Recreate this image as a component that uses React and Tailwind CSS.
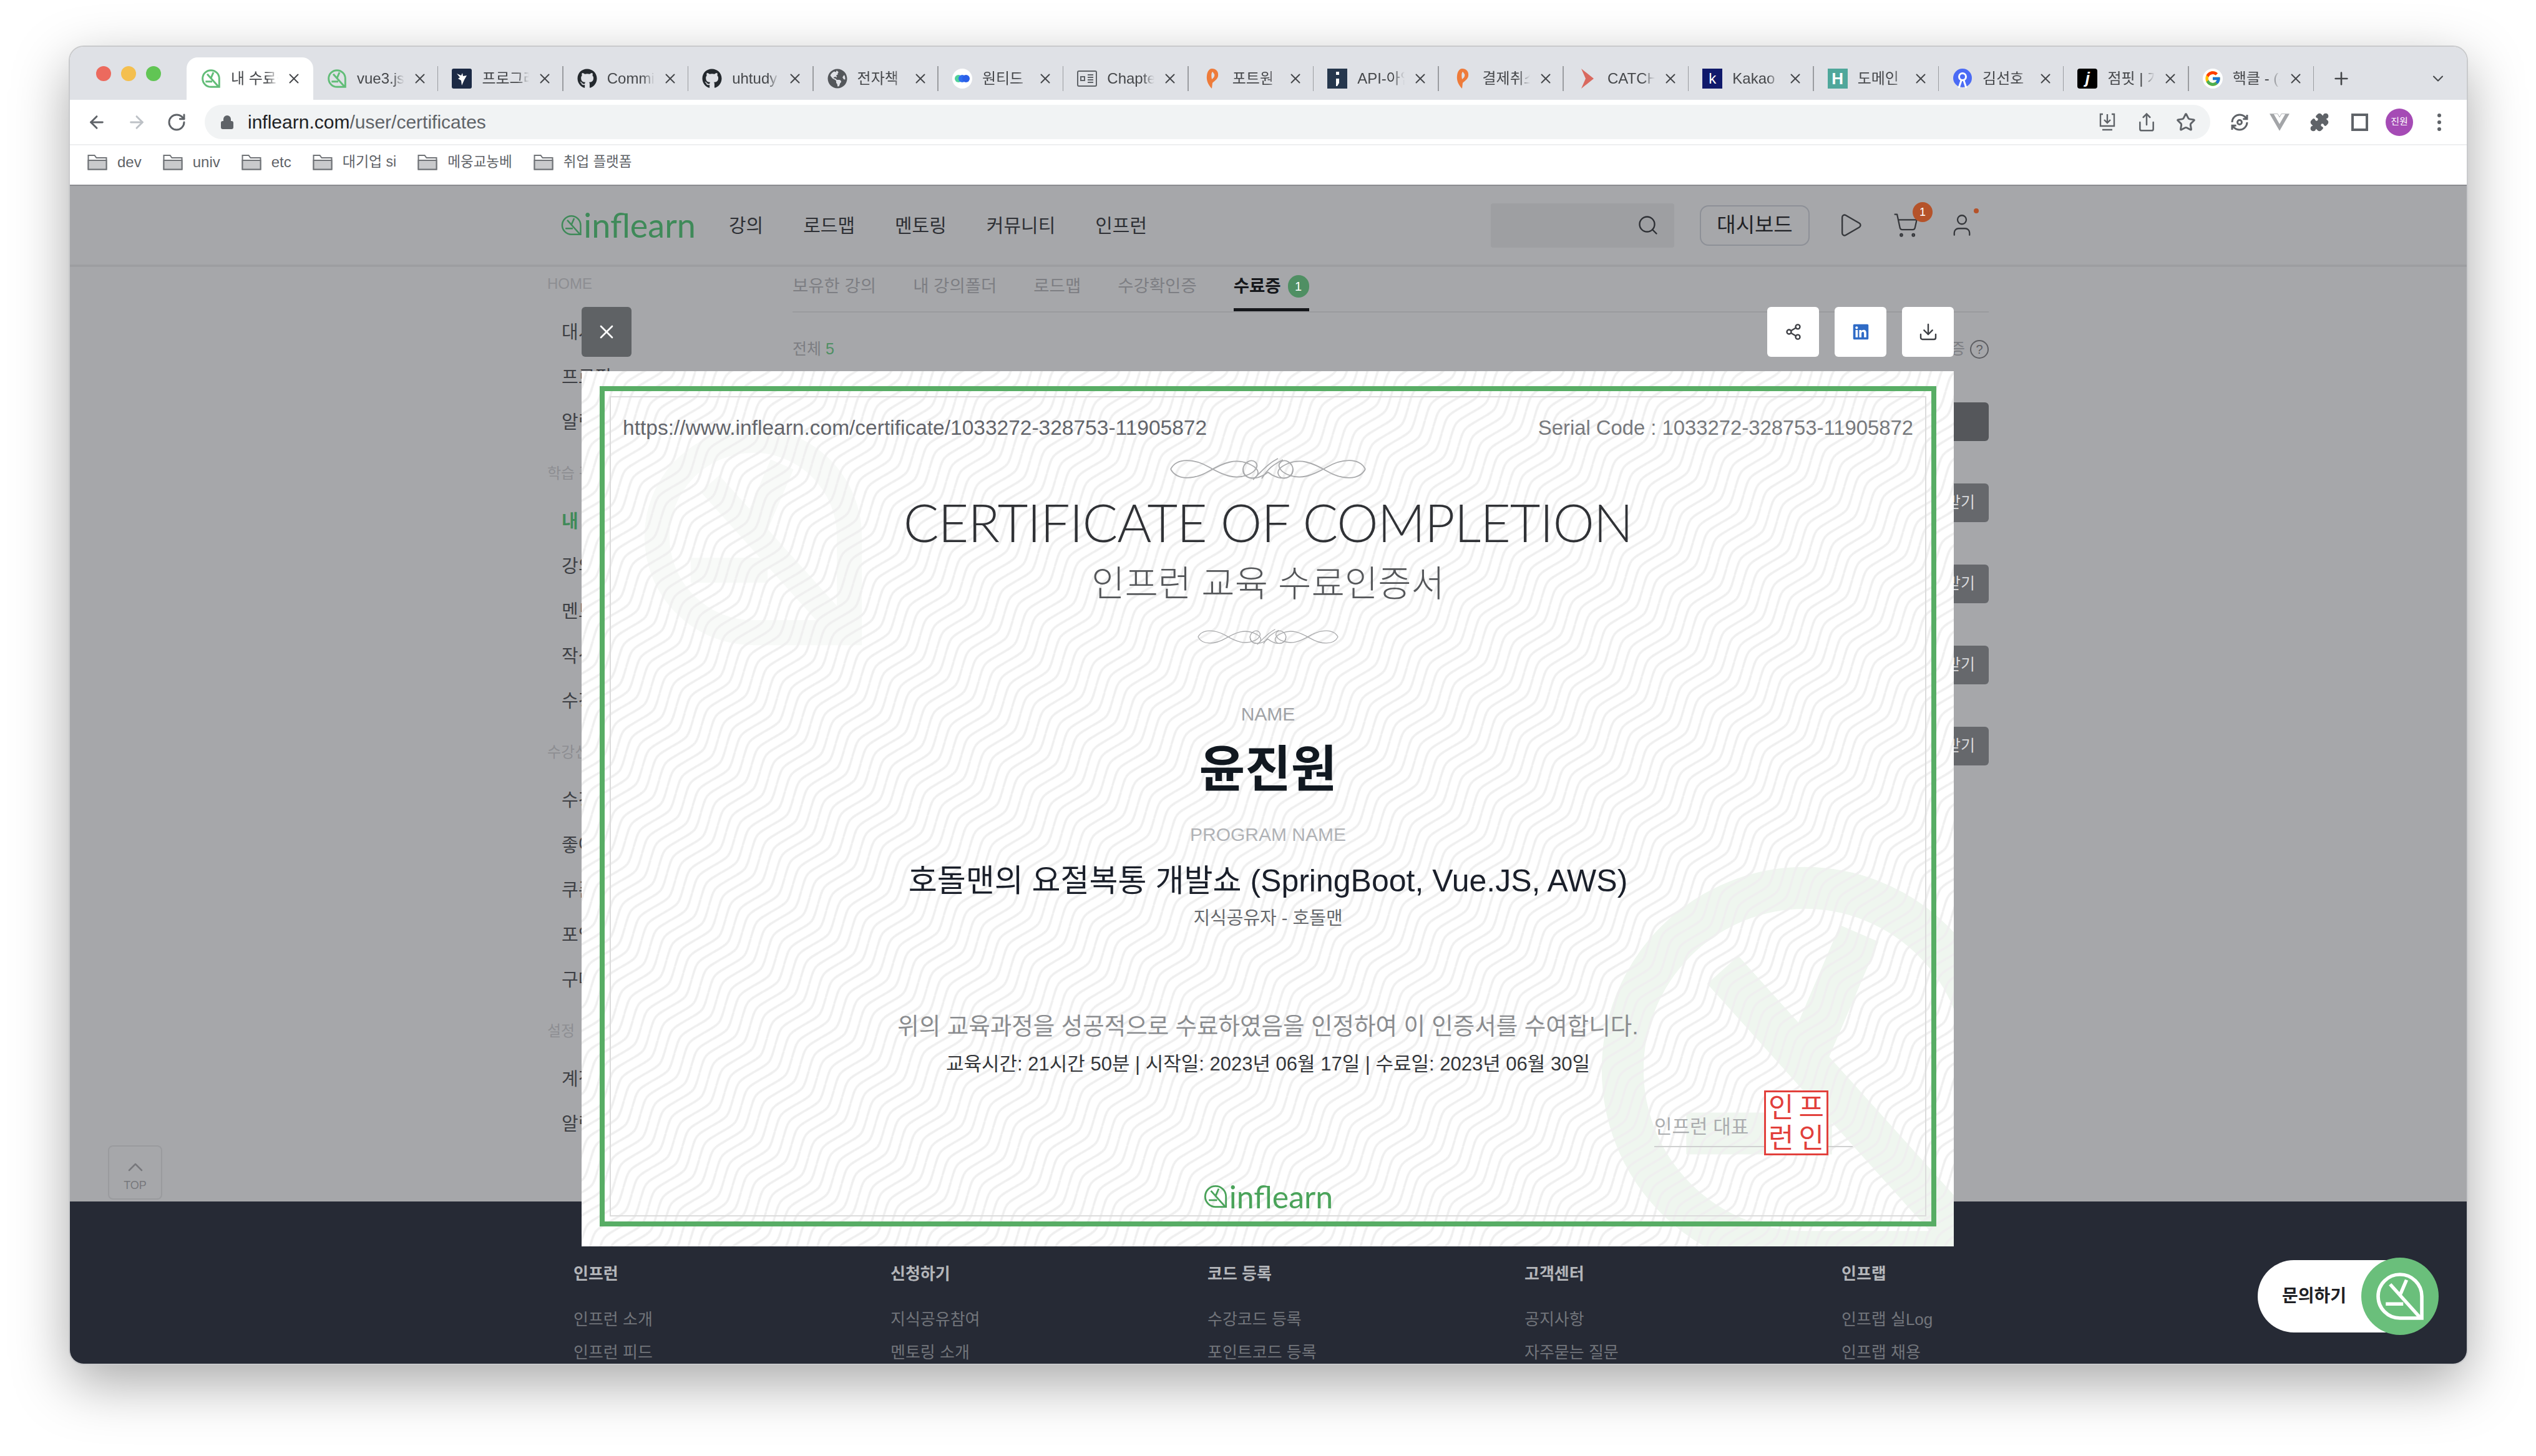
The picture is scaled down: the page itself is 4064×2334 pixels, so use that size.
import { ArrowLeft, ArrowRight, ChevronDown, ChevronUp, Download, Lock, Play, Plus, Puzzle, RotateCw, Search, Share, Share2, ShoppingCart, Star, User, X } from 'lucide-react';
import { FaGithub, FaGlobeAmericas, FaLinkedin } from 'react-icons/fa';
import { FcGoogle } from 'react-icons/fc';
import { SiVuedotjs } from 'react-icons/si';

const sans = "font-['Liberation_Sans','Noto_Sans_CJK_KR',sans-serif]";

function Leaf({ className, width = 2 }) {
  return (
    <svg viewBox="0 0 24 24" fill="none" stroke="currentColor" strokeWidth={width} className={className}>
      <path d="M12 2a10 10 0 1 0 0 20h10V12A10 10 0 0 0 12 2Z" />
      <path d="M7.5 6.5 21 21.5M15 4.5 12 11.5M5.5 15.5h8" />
    </svg>
  );
}

function Favicon({ kind }) {
  if (kind === 'leaf') return <Leaf className="w-[32px] h-[32px] text-[#62bd78]" width={2.2} />;
  if (kind === 'github') return <FaGithub className="w-[32px] h-[32px] text-[#24292e]" />;
  if (kind === 'globe') return <FaGlobeAmericas className="w-[32px] h-[32px] text-[#54575b]" />;
  if (kind === 'google') return <div className="w-[32px] h-[32px] rounded-full bg-white flex items-center justify-center"><FcGoogle className="w-[28px] h-[28px]" /></div>;
  if (kind === 'programmers') {
    return (
      <svg viewBox="0 0 32 32" className="w-[32px] h-[32px]">
        <rect width="32" height="32" rx="3" fill="#1c2a45" />
        <path d="M8 8l7 3 2-4 1 5 6-1-4 7-4 9-1-8-5-3 3-2z" fill="#fff" />
      </svg>
    );
  }
  if (kind === 'wanted') {
    return (
      <svg viewBox="0 0 32 32" className="w-[32px] h-[32px]">
        <circle cx="16" cy="16" r="16" fill="#fff" />
        <circle cx="10" cy="16" r="6" fill="#4fd19b" />
        <circle cx="16" cy="16" r="6" fill="#2f6df0" />
        <circle cx="22" cy="16" r="6" fill="#2a5fe8" />
      </svg>
    );
  }
  if (kind === 'chapter') {
    return (
      <svg viewBox="0 0 32 32" fill="none" stroke="#5f6368" strokeWidth="2" className="w-[32px] h-[32px]">
        <rect x="1" y="4" width="30" height="24" rx="2" />
        <path d="M17 10h9M17 14h9M17 18h9M17 22h9M6 13h6v6H6z" />
      </svg>
    );
  }
  if (kind === 'portone') {
    return (
      <svg viewBox="0 0 32 32" className="w-[32px] h-[32px]">
        <path d="M15 0c8 0 11 6 10 12-1 5-6 8-9 11l-1 9C9 26 6 19 7 11 8 4 11 0 15 0Zm1 5c-2 2-2 6-1 12 3-2 5-5 4-8-1-2-2-3-3-4Z" fill="#ee7b3a" />
      </svg>
    );
  }
  if (kind === 'semicolon') {
    return (
      <svg viewBox="0 0 32 32" className="w-[32px] h-[32px]">
        <rect width="32" height="32" fill="#26374d" />
        <rect x="14" y="5" width="5" height="5" fill="#fff" />
        <path d="M14 16h5v7l-3 5h-2z" fill="#fff" />
      </svg>
    );
  }
  if (kind === 'catch') {
    return (
      <svg viewBox="0 0 32 32" className="w-[32px] h-[32px]">
        <path d="M6 0l20 16L6 32l7-16z" fill="#d9695f" />
      </svg>
    );
  }
  if (kind === 'kakao') return <div className="w-[32px] h-[32px] bg-[#10196b] text-white text-[24px] leading-[32px] text-center">k</div>;
  if (kind === 'hosting') return <div className="w-[32px] h-[32px] bg-[#4fa79b] text-white text-[26px] leading-[32px] text-center font-bold">H</div>;
  if (kind === 'rallit') {
    return (
      <svg viewBox="0 0 32 32" className="w-[32px] h-[32px]">
        <ellipse cx="16" cy="15" rx="15" ry="15" fill="#4b6bf5" />
        <circle cx="16" cy="13" r="5.5" fill="none" stroke="#fff" strokeWidth="3" />
        <path d="M14 19l-4 12M18 19l4 12" stroke="#fff" strokeWidth="3" />
      </svg>
    );
  }
  return <div className="w-[32px] h-[32px] rounded-[4px] bg-black text-white text-[26px] leading-[30px] text-center font-bold italic">j</div>;
}

const tabs = [
  ['leaf', '내 수료증'],
  ['leaf', 'vue3.js'],
  ['programmers', '프로그래머스'],
  ['github', 'Commits'],
  ['github', 'uhtudy'],
  ['globe', '전자책'],
  ['wanted', '원티드'],
  ['chapter', 'Chapter'],
  ['portone', '포트원'],
  ['semicolon', 'API-아임포트'],
  ['portone', '결제취소'],
  ['catch', 'CATCH'],
  ['kakao', 'Kakao'],
  ['hosting', '도메인'],
  ['rallit', '김선호'],
  ['jumpit', '점핏 | 개발'],
  ['google', '핵클 - (주)'],
];

function TabBar() {
  return (
    <div className="h-[85px] shrink-0 bg-[#dfe1e6] flex items-end">
      <div className="h-[68px] w-[187px] shrink-0 flex items-center gap-[16px] pl-[42px] pb-[16px]">
        <span className="w-[24px] h-[24px] rounded-full bg-[#ec6a5e]" />
        <span className="w-[24px] h-[24px] rounded-full bg-[#f4bf4f]" />
        <span className="w-[24px] h-[24px] rounded-full bg-[#61c554]" />
      </div>
      {tabs.map(([kind, title], i) => (
        <div key={i} className={i === 0 ? 'h-[68px] w-[203px] shrink-0 flex items-center bg-white rounded-t-[18px] pl-[23px]' : 'h-[68px] w-[200.4px] shrink-0 flex items-center pl-[22px]'}>
          <Favicon kind={kind} />
          <span className="ml-[16px] w-[76px] overflow-hidden whitespace-nowrap text-[24px] text-[#45474a] [mask-image:linear-gradient(to_right,black_75%,transparent)]">{title}</span>
          <X className="ml-[12px] w-[26px] h-[26px] text-[#45474a] shrink-0" strokeWidth={1.8} />
          {i > 0 && <span className="ml-auto h-[40px] w-[1.5px] bg-[#9a9ca0]" />}
        </div>
      ))}
      <div className="h-[68px] flex items-center">
        <Plus className="ml-[28px] w-[32px] h-[32px] text-[#45474a]" strokeWidth={2} />
        <ChevronDown className="ml-[125px] w-[28px] h-[28px] text-[#45474a]" strokeWidth={1.8} />
      </div>
    </div>
  );
}

function Toolbar() {
  return (
    <div className="h-[71px] shrink-0 bg-white flex items-center pl-[27px]">
      <div className="flex items-center gap-[32px] text-[#5f6368]">
        <ArrowLeft className="w-[32px] h-[32px]" strokeWidth={2.2} />
        <ArrowRight className="w-[32px] h-[32px] text-[#bdc1c6]" strokeWidth={2.2} />
        <RotateCw className="w-[32px] h-[32px]" strokeWidth={2.2} />
      </div>
      <div className="ml-[29px] w-[3214px] h-[55px] rounded-full bg-[#f1f3f4] flex items-center pl-[24px] pr-[23px]">
        <Lock className="w-[24px] h-[24px] text-[#5f6368] fill-[#5f6368]" />
        <span className="ml-[21px] text-[30px] text-[#202124]">inflearn.com<span className="text-[#5f6368]">/user/certificates</span></span>
        <div className="ml-auto flex items-center gap-[31px] text-[#5f6368]">
          <svg viewBox="0 0 32 32" fill="none" stroke="currentColor" strokeWidth="2.4" className="w-[32px] h-[32px]">
            <path d="M9 3H5v19h22V3h-4M16 3v14M11 12l5 5 5-5M8 28h16" />
          </svg>
          <Share className="w-[32px] h-[32px]" strokeWidth={1.9} />
          <Star className="w-[32px] h-[32px]" strokeWidth={2.2} />
        </div>
      </div>
      <div className="ml-[31px] flex items-center gap-[32px] text-[#5f6368]">
        <svg viewBox="0 0 24 24" fill="none" stroke="currentColor" strokeWidth="2.2" className="w-[32px] h-[32px]">
          <path d="M3 12a9 9 0 0 1 9-9 9.75 9.75 0 0 1 6.74 2.74L21 8M21 3v5h-5M21 12a9 9 0 0 1-9 9 9.75 9.75 0 0 1-6.74-2.74L3 16M8 16H3v5" />
          <circle cx="12" cy="12" r="2.6" />
        </svg>
        <SiVuedotjs className="w-[32px] h-[32px] text-[#a3a5a8]" />
        <Puzzle className="w-[32px] h-[32px] fill-[#5f6368]" strokeWidth={1.5} />
        <div className="w-[32px] flex justify-center">
          <span className="w-[27px] h-[28px] border-[4px] border-[#5f6368]" />
        </div>
        <div className="w-[32px] flex justify-center">
          <span className="shrink-0 w-[44px] h-[44px] rounded-full bg-[#a54bb5] text-white text-[15px] flex items-center justify-center">진원</span>
        </div>
        <div className="w-[32px] flex flex-col items-center gap-[5px]">
          <span className="w-[6px] h-[6px] rounded-full bg-[#5f6368]" />
          <span className="w-[6px] h-[6px] rounded-full bg-[#5f6368]" />
          <span className="w-[6px] h-[6px] rounded-full bg-[#5f6368]" />
        </div>
      </div>
    </div>
  );
}

function FolderIcon() {
  return (
    <svg viewBox="0 0 32 26" className="w-[32px] h-[26px]">
      <path d="M1.5 24.5V2h10l3 4h16v18.5z" fill="#fff" stroke="#6f7276" strokeWidth="2" />
      <path d="M1.5 10h29v14.5h-29z" fill="#c9cacc" stroke="#6f7276" strokeWidth="2" />
    </svg>
  );
}

const bookmarks = [
  ['dev', 'text-[24px]'],
  ['univ', 'text-[24px]'],
  ['etc', 'text-[24px]'],
  ['대기업 si', 'text-[23px]'],
  ['메웅교농베', 'text-[22.5px]'],
  ['취업 플랫폼', 'text-[22.5px]'],
];

function Bookmarks() {
  return (
    <div className="h-[65px] shrink-0 bg-white border-t-2 border-[#eeeff0] flex items-center pl-[28px] pb-[10px] gap-[34px]">
      {bookmarks.map(([name, size]) => (
        <div key={name} className={`flex items-center gap-[16px] text-[#5f6368] ${size}`}>
          <FolderIcon />
          <span className="whitespace-nowrap">{name}</span>
        </div>
      ))}
    </div>
  );
}

function Logo({ className, text }) {
  return (
    <div className={`flex items-center ${className}`}>
      <Leaf className="w-[40px] h-[40px]" width={1.7} />
      <span className={`font-['Lato',sans-serif] leading-none ${text}`}>inflearn</span>
    </div>
  );
}

const sideGroups = [
  { items: ['대시보드', '프로필', '알림'] },
  { label: '학습 관리', items: ['내 학습', '강의 노트', '멘토링', '작성한 글', '수강 전 문의'] },
  { label: '수강신청 관리', items: ['수강바구니', '좋아요', '쿠폰함', '포인트', '구매내역'] },
  { label: '설정', items: ['계정 정보', '알림 설정'] },
];

function Sidebar() {
  return (
    <aside className="w-[393px] shrink-0 pt-[7px]">
      <div className="h-[40px] flex items-center text-[24px] text-[#8d8e92] mb-[23px]">HOME</div>
      {sideGroups.map((g, i) => (
        <div key={i}>
          {g.label && <div className="h-[48px] mt-[21px] mb-[18px] flex items-center text-[24px] text-[#8d8e92]">{g.label}</div>}
          {g.items.map((it) => (
            <div key={it} className={it === '내 학습' ? 'h-[72px] pl-[23px] flex items-center text-[29px] font-bold text-[#3f8a59]' : 'h-[72px] pl-[23px] flex items-center text-[29px] text-[#3d3f44]'}>{it}</div>
          ))}
        </div>
      ))}
    </aside>
  );
}

function MainContent() {
  return (
    <section className="w-[1917px] shrink-0">
      <div className="h-[73px] flex border-b-2 border-[#9a9b9e] text-[27.5px] text-[#7d7e83] gap-[59px]">
        <span className="h-[71px] pb-[9px] flex items-center">보유한 강의</span>
        <span className="h-[71px] pb-[9px] flex items-center">내 강의폴더</span>
        <span className="h-[71px] pb-[9px] flex items-center">로드맵</span>
        <span className="h-[71px] pb-[9px] flex items-center">수강확인증</span>
        <span className="h-[71px] pb-[4px] border-b-[5px] border-[#15171b] flex items-center gap-[11px] font-bold text-[#15171b]">
          수료증
          <span className="w-[34px] h-[36px] rounded-full bg-[#4f8f63] text-white text-[20px] font-normal flex items-center justify-center">1</span>
        </span>
      </div>
      <div className="mt-[39px] h-[40px] flex items-center text-[25px] text-[#7d7e83]">
        <span>전체 <span className="text-[#4f8f63]">5</span></span>
        <span className="ml-auto">수료증</span>
        <span className="ml-[8px] w-[30px] h-[30px] rounded-full border-2 border-[#5d5e62] text-[#5d5e62] text-[20px] flex items-center justify-center">?</span>
      </div>
      <div className="mt-[65px] flex flex-col items-end gap-[68px]">
        <div className="w-[200px] h-[62px] rounded-[6px] bg-[#55575b]" />
        {[0, 1, 2, 3].map((i) => (
          <div key={i} className="w-[200px] h-[62px] rounded-[6px] bg-[#66686c] text-[#d9dadc] text-[25px] flex items-center justify-end pr-[22px]">받기</div>
        ))}
      </div>
    </section>
  );
}

function Ornament({ className }) {
  return (
    <svg viewBox="0 0 320 50" fill="none" stroke="#a9aaac" strokeWidth="1.8" className={className}>
      <path d="M4 25C14 6 42 8 66 22s42 20 62 12c12-5 18-14 12-20-8-7-20 2-20 12 0 16 22 18 40 4 18 14 40 12 40-4 0-10-12-19-20-12-6 6 0 15 12 20 20 8 38 2 62-12s52-16 62 3" />
      <path d="M4 25c10 19 38 17 62 3s42-20 62-12c12 5 20 12 14 20-7 8-22 2-22-12M316 25c-10 19-38 17-62 3s-42-20-62-12c-12 5-20 12-14 20 7 8 22 2 22-12" />
      <path d="M150 40c10-16 18-22 34-30M136 42c12-12 24-26 40-34" />
    </svg>
  );
}

function Certificate() {
  return (
    <div className="absolute left-[820px] top-[297px] w-[2199px] h-[1403px] bg-white overflow-hidden pt-[24px] pl-[29px] pr-[28px] pb-[32px]">
      <Leaf className="absolute left-[90px] top-[80px] w-[370px] h-[370px] text-[#f8faf8]" width={2.6} />
      <Leaf className="absolute left-[1610px] top-[770px] w-[700px] h-[700px] text-[#eff6ef]" width={2.3} />
      <svg className="absolute inset-0 w-full h-full">
        <defs>
          <pattern id="waves" width="110" height="17" patternUnits="userSpaceOnUse" patternTransform="rotate(-52)">
            <path d="M0 8.5C28-3 27-3 55 8.5S82 20 110 8.5M0-8.5C28-20 27-20 55-8.5S82 3 110-8.5M0 25.5C28 14 27 14 55 25.5S82 37 110 25.5" fill="none" stroke="#efefef" strokeWidth="3.5" />
          </pattern>
        </defs>
        <rect width="100%" height="100%" fill="url(#waves)" />
      </svg>
      <div className="relative h-full border-[8px] border-[#58ad65] p-[8px]">
        <div className="relative h-full border-2 border-[#dcdcdc] px-[19px] pt-[23px] flex flex-col items-center">
          <div className="w-full h-[52px] flex items-center justify-between text-[#63656b]">
            <span className="text-[33.5px]">https://www.inflearn.com/certificate/1033272-328753-11905872</span>
            <span className="text-[32.8px] text-[#77797d]">Serial Code : 1033272-328753-11905872</span>
          </div>
          <Ornament className="mt-[15px] w-[322px] h-[50px]" />
          <h1 className="h-[130px] pb-[10px] flex items-center font-['Lato',sans-serif] font-light text-[84px] tracking-[-1px] text-[#303236]">CERTIFICATE OF COMPLETION</h1>
          <h2 className="h-[56px] flex items-center text-[58px] font-light text-[#55575a]">인프런 교육 수료인증서</h2>
          <Ornament className="mt-[33px] w-[230px] h-[50px]" />
          <p className="mt-[78px] h-[40px] flex items-center text-[30px] text-[#a0a2a6]">NAME</p>
          <p className="mt-[20px] h-[100px] flex items-center text-[80px] font-bold text-[#111820]">윤진원</p>
          <p className="mt-[33px] h-[40px] flex items-center text-[30px] text-[#b0b2b6]">PROGRAM NAME</p>
          <p className="mt-[20px] h-[70px] flex items-center text-[50px] text-[#1a1f2a]">호돌맨의 요절복통 개발쇼 (SpringBoot, Vue.JS, AWS)</p>
          <p className="mt-[6px] h-[40px] flex items-center text-[29px] text-[#66686c]">지식공유자 - 호돌맨</p>
          <p className="mt-[122px] h-[60px] flex items-center text-[37.5px] text-[#8a8c8f]">위의 교육과정을 성공적으로 수료하였음을 인정하여 이 인증서를 수여합니다.</p>
          <p className="mt-[11px] h-[40px] flex items-center text-[31px] text-[#333539]">교육시간: 21시간 50분 | 시작일: 2023년 06월 17일 | 수료일: 2023년 06월 30일</p>
          <Logo className="mt-[167px] h-[50px] text-[#4aa35a] gap-[2px]" text="text-[50px]" />
          <div className="absolute left-[1672px] top-[1111px] w-[318px]">
            <div className="h-[91px] border-b-2 border-[#cfd0d0] flex items-end pb-[7px] text-[31px] text-[#aaacae]">인프런 대표</div>
            <div className="absolute left-[176px] top-0 w-[103px] h-[104px] border-[3px] border-[#e2403c] bg-white grid grid-cols-2 place-items-center text-[44px] leading-none text-[#e2403c]">
              <span>인</span>
              <span>프</span>
              <span>런</span>
              <span>인</span>
            </div>
          </div>
        </div>
      </div>
    </div>
  );
}

const footerCols = [
  ['인프런', '인프런 소개', '인프런 피드'],
  ['신청하기', '지식공유참여', '멘토링 소개'],
  ['코드 등록', '수강코드 등록', '포인트코드 등록'],
  ['고객센터', '공지사항', '자주묻는 질문'],
  ['인프랩', '인프랩 실Log', '인프랩 채용'],
];

function Footer() {
  return (
    <footer className="h-[260px] shrink-0 bg-[#262a35] pl-[807px] pt-[96px] flex overflow-hidden">
      {footerCols.map(([head, a, b]) => (
        <div key={head} className="w-[508px] shrink-0">
          <div className="h-[40px] flex items-center text-[26px] font-bold text-[#b4b6ba]">{head}</div>
          <div className="mt-[27px] h-[53px] flex items-center text-[26px] text-[#72757b]">{a}</div>
          <div className="h-[53px] flex items-center text-[26px] text-[#72757b]">{b}</div>
        </div>
      ))}
    </footer>
  );
}

export default function App() {
  return (
    <div className={`w-[4064px] h-[2334px] bg-white pt-[75px] pl-[112px] ${sans}`}>
      <div className="w-[3841px] h-[2111px] flex flex-col overflow-hidden rounded-[22px] ring-2 ring-[#c9cacc] shadow-[0_30px_90px_rgba(0,0,0,0.35)]">
        <TabBar />
        <Toolbar />
        <Bookmarks />
        <div className="relative flex-1 flex flex-col bg-[#a6a7aa] overflow-hidden border-t-2 border-[#8b8c90]">
          <header className="h-[130px] shrink-0 flex items-center pl-[786px] border-b-4 border-[#9d9ea1]">
            <Logo className="w-[217px] text-[#3f8a59] gap-[2px]" text="text-[54px]" />
            <nav className="ml-[53px] flex items-center gap-[64px] text-[30px] text-[#2e3035]">
              <span>강의</span>
              <span>로드맵</span>
              <span>멘토링</span>
              <span>커뮤니티</span>
              <span>인프런</span>
            </nav>
            <div className="ml-auto w-[294px] h-[71px] rounded-[4px] bg-[#9e9fa2] flex items-center justify-end pr-[24px]">
              <Search className="w-[36px] h-[36px] text-[#2e3035]" strokeWidth={1.6} />
            </div>
            <div className="ml-[41px] w-[176px] h-[65px] rounded-[14px] border-2 border-[#8d9097] flex items-center justify-center text-[33px] text-[#1f2125]">대시보드</div>
            <Play className="ml-[43px] w-[44px] h-[44px] text-[#35373b]" strokeWidth={1.3} />
            <div className="relative ml-[46px]">
              <ShoppingCart className="w-[42px] h-[42px] text-[#35373b]" strokeWidth={1.3} />
              <span className="absolute -top-[16px] -right-[22px] w-[32px] h-[32px] rounded-full bg-[#b5532a] text-white text-[18px] flex items-center justify-center">1</span>
            </div>
            <div className="relative ml-[48px] mr-[788px]">
              <User className="w-[42px] h-[42px] text-[#35373b]" strokeWidth={1.3} />
              <span className="absolute -top-[6px] -right-[6px] w-[8px] h-[8px] rounded-full bg-[#b5532a]" />
            </div>
          </header>
          <main className="flex-1 flex pl-[765px] overflow-hidden">
            <Sidebar />
            <MainContent />
          </main>
          <Footer />
          <div className="absolute left-[61px] bottom-[263px] w-[87px] h-[87px] rounded-[8px] border-2 border-[#9a9b9e] flex flex-col items-center justify-center text-[#77787c]">
            <ChevronUp className="w-[40px] h-[40px]" strokeWidth={1.5} />
            <span className="text-[18px] leading-none">TOP</span>
          </div>
          <div className="absolute left-[820px] top-[194px] w-[80px] h-[80px] rounded-[6px] bg-[#5f6265] flex items-center justify-center text-white">
            <X className="w-[36px] h-[36px]" strokeWidth={1.8} />
          </div>
          <div className="absolute left-[2720px] top-[194px] flex gap-[25px]">
            <div className="w-[83px] h-[80px] rounded-[6px] bg-white flex items-center justify-center text-[#3d3f44]">
              <Share2 className="w-[28px] h-[28px]" strokeWidth={2} />
            </div>
            <div className="w-[83px] h-[80px] rounded-[6px] bg-white flex items-center justify-center text-[#2f6bc6]">
              <FaLinkedin className="w-[28px] h-[28px]" />
            </div>
            <div className="w-[83px] h-[80px] rounded-[6px] bg-white flex items-center justify-center text-[#3d3f44]">
              <Download className="w-[32px] h-[32px]" strokeWidth={1.8} />
            </div>
          </div>
          <Certificate />
          <div className="absolute right-[45px] bottom-[46px] flex items-center">
            <div className="w-[241px] h-[116px] rounded-l-full bg-white flex items-center pl-[39px] text-[28px] font-bold text-[#1f2125]">문의하기</div>
            <div className="-ml-[75px] w-[124px] h-[124px] rounded-full bg-[#6abf7b] flex items-center justify-center text-white">
              <Leaf className="w-[84px] h-[84px]" width={1.6} />
            </div>
          </div>
        </div>
      </div>
    </div>
  );
}
